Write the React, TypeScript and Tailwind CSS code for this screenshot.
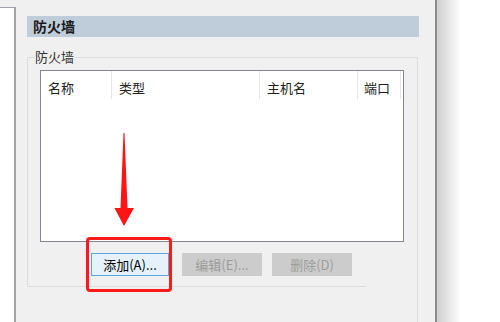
import React from 'react';

const font = { fontFamily: '"Noto Sans CJK SC", "Noto Sans", sans-serif' };

function Btn({ label, w, primary }: { label: string; w: string; primary?: boolean }) {
  return (
    <div
      className={`${w} h-[23px] flex items-center justify-center text-[13px] leading-none ${
        primary
          ? 'bg-[#e5f1fb] border border-[#5fa5e6] text-black'
          : 'bg-[#cccccc] border border-[#cccccc] text-[#9c9c9c]'
      }`}
    >
      {label}
    </div>
  );
}

export default function App() {
  return (
    <div className="w-[500px] h-[322px] flex bg-[#f0f0f0] overflow-hidden relative" style={font}>
      {/* left list edge */}
      <div className="w-[16px] pt-[7px] flex flex-col">
        <div className="flex-1 bg-white border-t border-r-2 border-[#9ea2aa]" />
      </div>

      {/* main panel */}
      <div className="w-[419px] flex flex-col">
        <div className="ml-[11px] mt-[16px] w-[392px] h-[21px] bg-[#bfcddb] flex items-center pl-[6px] text-[14px] font-bold text-[#1a1a1a]">
          防火墙
        </div>

        <div className="ml-[11px] mt-[20px] w-[391px] border-t border-x border-[#dcdcdc] relative pt-[12px] pl-[12px] pb-[10px]">
          <div className="absolute -top-[9px] left-[6px] px-[1px] bg-[#f0f0f0] text-[13px] leading-[16px] text-[#333]">
            防火墙
          </div>

          <div className="w-[364px] h-[172px] bg-white border border-[#828790] flex flex-col">
            <div className="h-[28px] flex text-[13px] text-[#222]">
              <div className="w-[71px] border-r border-[#e5e5e5] pl-[7px] pt-[7px]">名称</div>
              <div className="w-[148px] border-r border-[#e5e5e5] pl-[7px] pt-[7px]">类型</div>
              <div className="w-[98px] border-r border-[#e5e5e5] pl-[7px] pt-[7px]">主机名</div>
              <div className="w-[43px] border-r border-[#e5e5e5] pl-[6px] pt-[7px]">端口</div>
            </div>
          </div>

          <div className="flex mt-[11px] ml-[51px]">
            <Btn label="添加(A)..." w="w-[78px]" primary />
            <div className="w-[13px]" />
            <Btn label="编辑(E)..." w="w-[80px]" />
            <div className="w-[10px]" />
            <Btn label="删除(D)" w="w-[80px]" />
          </div>
        </div>

        <div className="ml-[11px] w-[391px] h-[1px] border-r border-[#dcdcdc] flex">
          <div className="w-[339px] h-[1px] bg-[#dcdcdc]" />
        </div>
        <div className="ml-[11px] w-[391px] flex-1 border-r border-[#dcdcdc]" />
      </div>

      {/* right shadow */}
      <div className="flex-1 flex bg-white">
        <div className="w-[2px] bg-[#8c8c8c]" />
        <div className="w-[24px] bg-gradient-to-r from-[#cfcfcf] to-white" />
      </div>

      {/* red arrow */}
      <svg className="absolute left-0 top-0 pointer-events-none" width="500" height="322">
        <polygon points="123.5,133 124.5,133 127.5,208 134,208 124,226 114.5,208 120.5,208" fill="#ff1414" />
      </svg>

      {/* red highlight */}
      <div className="absolute left-[86px] top-[237px] w-[86px] h-[55px] border-[3px] border-[#ff1a1a] rounded-[4px] pointer-events-none" />
    </div>
  );
}
